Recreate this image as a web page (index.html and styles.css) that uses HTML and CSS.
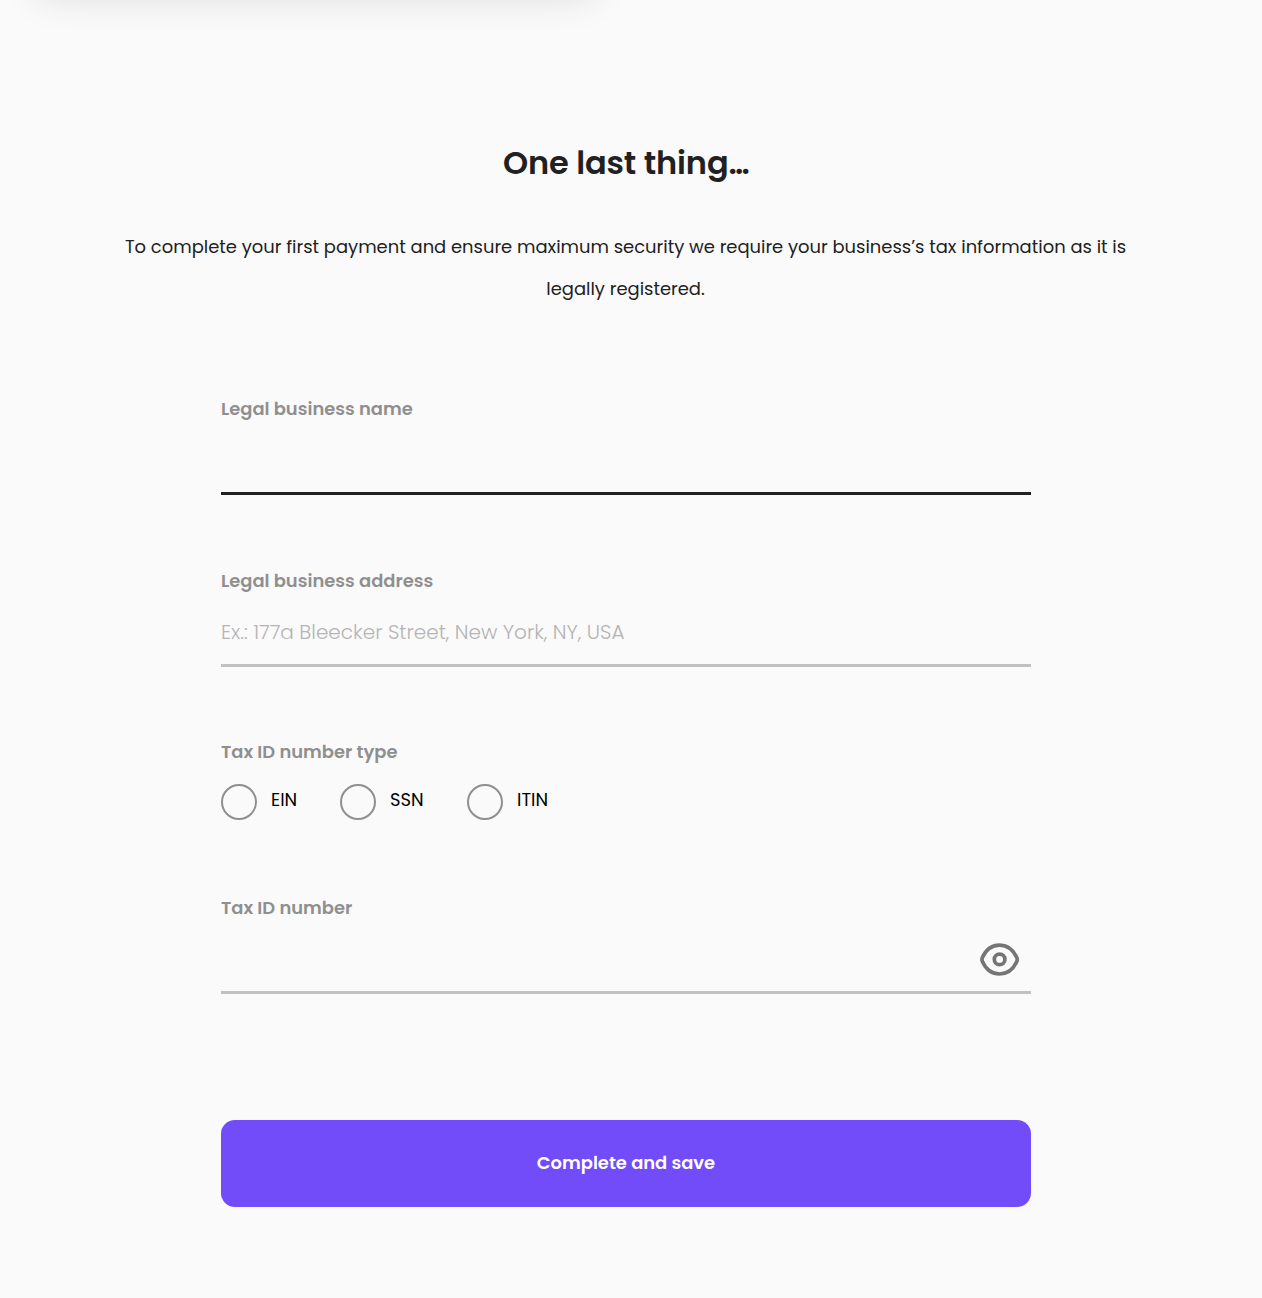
FILE: index.html
```html
<!DOCTYPE html>
<html lang="en">
<head>
<meta charset="utf-8">
<title>One last thing...</title>
<link rel="stylesheet" href="styles.css">
</head>
<body>
<div class="top-shadow"></div>
<main class="page">
  <h1 class="title">One last thing<span class="dots">...</span></h1>
  <p class="intro">To complete your first payment and ensure maximum security we require your business’s tax information as it is<br>legally registered.</p>
  <form class="form">
    <div class="field active">
      <label class="label" for="name">Legal business name</label>
      <input class="input" id="name" type="text">
    </div>
    <div class="field">
      <label class="label" for="address">Legal business address</label>
      <input class="input" id="address" type="text" placeholder="Ex.: 177a Bleecker Street, New York, NY, USA">
    </div>
    <div class="type">
      <div class="label">Tax ID number type</div>
      <div class="options">
        <label class="option"><input class="radio" type="radio" name="type"><span>EIN</span></label>
        <label class="option"><input class="radio" type="radio" name="type"><span>SSN</span></label>
        <label class="option"><input class="radio" type="radio" name="type"><span>ITIN</span></label>
      </div>
    </div>
    <div class="field">
      <label class="label" for="taxid">Tax ID number</label>
      <div class="secret">
        <input class="input" id="taxid" type="text">
        <svg class="eye" viewBox="0 0 40 34" width="40" height="34" fill="none" stroke="#757575" stroke-width="3.7" stroke-linejoin="round">
          <path d="M2.400 14.500C5.800 7 12 2.100 19.600 2.100S33.400 7 36.800 14.500Q37.700 16.500 36.800 18.500C33.400 26 27.200 31 19.600 31S5.800 26 2.400 18.500Q1.500 16.500 2.400 14.500Z"/>
          <circle cx="19.600" cy="16.400" r="5.300"/>
        </svg>
      </div>
    </div>
    <button class="submit" type="button">Complete and save</button>
  </form>
</main>
</body>
</html>
```

FILE: styles.css
```css
* { box-sizing: border-box; }

body {
  margin: 0;
  min-height: 1298px;
  background: #fafafa;
  color: #212121;
  font-family: Poppins, Inter, sans-serif;
  overflow: hidden;
}

.top-shadow {
  position: absolute;
  top: -70px;
  left: 36px;
  width: 560px;
  height: 64px;
  border-radius: 14px;
  box-shadow: 0 0 40px rgba(0, 0, 0, 0.14);
}

.page {
  width: 1252px;
  padding-top: 139px;
}

.title {
  margin: 0;
  padding-right: 1px;
  font-size: 32px;
  line-height: 48px;
  font-weight: 600;
  letter-spacing: -0.1px;
  text-align: center;
}

.dots { letter-spacing: -1.8px; }

.intro {
  margin: 39px 0 0;
  padding-right: 1px;
  font-size: 17.93px;
  line-height: 42px;
  text-align: center;
  white-space: nowrap;
}

.form {
  display: flex;
  flex-direction: column;
  width: 810px;
  margin: 85px auto 0;
}

.field {
  display: flex;
  flex-direction: column;
  height: 100px;
  margin-bottom: 72px;
  border-bottom: 3px solid #c1c1c1;
}

.active { border-color: #212121; }

.label {
  align-self: flex-start;
  font-size: 17.9px;
  line-height: 28px;
  font-weight: 600;
  color: #8f8f8f;
}

.input {
  flex: 1;
  width: 100%;
  min-width: 0;
  padding: 5px 0 0;
  border: 0;
  outline: 0;
  background: none;
  font: 300 20.05px Poppins, Inter, sans-serif;
}

.input::placeholder { color: #b4b4b4; opacity: 1; }

.type {
  height: 82px;
  margin: -1px 0 74px;
}

.options {
  display: grid;
  grid-template-columns: 119px 127px auto;
  margin-top: 18px;
}

.option {
  display: flex;
  gap: 14px;
  color: #000;
  font-size: 17.9px;
  line-height: 32px;
}

.radio {
  appearance: none;
  width: 36px;
  height: 36px;
  margin: 0;
  border: 2px solid #8f8f8f;
  border-radius: 50%;
}

.secret {
  display: flex;
  flex: 1;
  padding-right: 11px;
}

.eye { margin-top: 21px; }

.submit {
  height: 87px;
  margin-top: 54px;
  padding: 0 0 2px;
  border: 0;
  border-radius: 14px;
  background: #714cf8;
  color: #fff;
  font: 600 17.9px Poppins, Inter, sans-serif;
}
```
